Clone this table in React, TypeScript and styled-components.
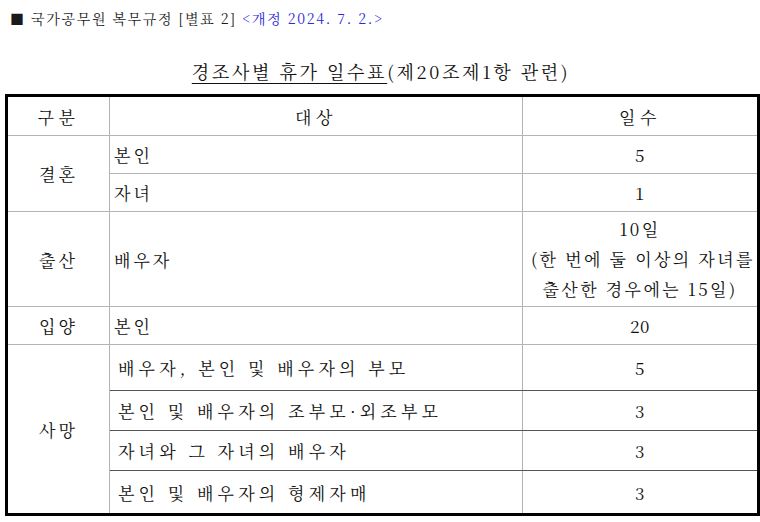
import React from "react";
import styled, { createGlobalStyle } from "styled-components";

const GlobalStyle = createGlobalStyle`
  html, body {
    margin: 0;
    padding: 0;
    background: #ffffff;
  }
  body {
    font-family: "Noto Serif CJK KR", "Liberation Serif", "Noto Sans CJK KR", serif;
    color: #111;
  }
`;

const Page = styled.div`
  width: 760px;
  height: 522px;
  padding: 6px 3px 0 5px;
  box-sizing: border-box;
  overflow: hidden;
`;

const Heading = styled.div`
  font-size: 14px;
  line-height: 24px;
  padding-left: 5px;
  color: #1a1a1a;
  letter-spacing: 1.7px;
`;

const Blue = styled.span`
  color: #2b2bd8;
`;

const Title = styled.div`
  margin-top: 28px;
  text-align: center;
  font-size: 18px;
  line-height: 26px;
  letter-spacing: 2.7px;
`;

const Under = styled.span`
  text-decoration: underline;
  text-underline-offset: 4px;
  text-decoration-thickness: 1px;
`;

const Table = styled.table`
  margin-top: 10px;
  width: 752px;
  border-collapse: collapse;
  table-layout: fixed;
  border: 3px solid #000;
  font-size: 17px;
`;

const Cell = styled.td<{
  $align?: "left" | "center";
  $h?: number;
  $dark?: boolean;
  $wide?: boolean;
  $num?: boolean;
}>`
  border: 1px solid #b4b4b4;
  ${(p) => (p.$dark ? "border-bottom-color: #555;" : "")}
  height: ${(p) => (p.$h ? p.$h : 37)}px;
  padding: 0 ${(p) => (p.$wide ? 8 : p.$align === "left" ? 4 : 8)}px;
  text-align: ${(p) => p.$align || "center"};
  vertical-align: middle;
  letter-spacing: ${(p) => (p.$num ? 0.5 : p.$wide ? 4.2 : 3)}px;
  white-space: nowrap;
`;

const HeadCell = styled.th`
  border: 1px solid #b4b4b4;
  height: 36px;
  font-weight: normal;
  text-align: center;
  letter-spacing: 4.5px;
`;

const Multi = styled.div`
  line-height: 30px;
  letter-spacing: 2.4px;
`;

type Death = { who: string; days: number };

const deaths: Death[] = [
  { who: "배우자, 본인 및 배우자의 부모", days: 5 },
  { who: "본인 및 배우자의 조부모·외조부모", days: 3 },
  { who: "자녀와 그 자녀의 배우자", days: 3 },
  { who: "본인 및 배우자의 형제자매", days: 3 },
];

const deathHeights = [45, 39, 39, 42];

const App: React.FC = () => {
  return (
    <Page>
      <GlobalStyle />
      <Heading>
        ■ 국가공무원 복무규정 [별표 2] <Blue>&lt;개정 2024. 7. 2.&gt;</Blue>
      </Heading>
      <Title>
        <Under>경조사별 휴가 일수표</Under>(제20조제1항 관련)
      </Title>
      <Table>
        <colgroup>
          <col style={{ width: 103 }} />
          <col style={{ width: 413 }} />
          <col style={{ width: 236 }} />
        </colgroup>
        <thead>
          <tr>
            <HeadCell>구분</HeadCell>
            <HeadCell>대상</HeadCell>
            <HeadCell>일수</HeadCell>
          </tr>
        </thead>
        <tbody>
          <tr>
            <Cell rowSpan={2}>결혼</Cell>
            <Cell $align="left">본인</Cell>
            <Cell $num>5</Cell>
          </tr>
          <tr>
            <Cell $align="left">자녀</Cell>
            <Cell $num>1</Cell>
          </tr>
          <tr>
            <Cell $h={94}>출산</Cell>
            <Cell $align="left">배우자</Cell>
            <Cell $num>
              <Multi>
                10일
                <br />
                (한 번에 둘 이상의 자녀를
                <br />
                출산한 경우에는 15일)
              </Multi>
            </Cell>
          </tr>
          <tr>
            <Cell>입양</Cell>
            <Cell $align="left">본인</Cell>
            <Cell $num>20</Cell>
          </tr>
          {deaths.map((d, i) => (
            <tr key={d.who}>
              {i === 0 && <Cell rowSpan={deaths.length}>사망</Cell>}
              <Cell $align="left" $wide $dark={i < deaths.length - 1} $h={deathHeights[i]}>
                {d.who}
              </Cell>
              <Cell $num $dark={i < deaths.length - 1} $h={deathHeights[i]}>
                {d.days}
              </Cell>
            </tr>
          ))}
        </tbody>
      </Table>
    </Page>
  );
};

export default App;
